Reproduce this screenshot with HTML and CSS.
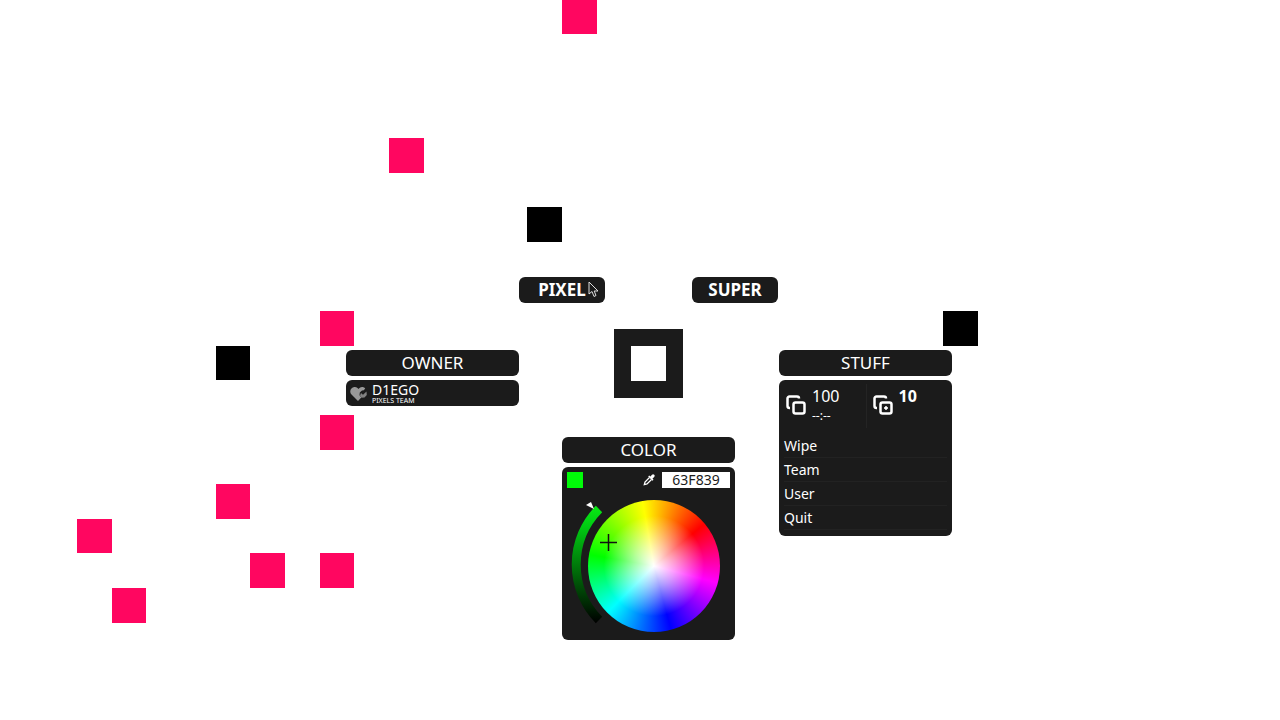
FILE: index.html
```html
<!DOCTYPE html>
<html lang="en">
<head>
<meta charset="utf-8">
<title>Pixels</title>
<link rel="stylesheet" href="styles.css">
</head>
<body>
<main class="board">
  <div class="world">
    <svg class="pixels" width="1" height="1" aria-hidden="true">
      <g class="pink">
        <rect x="-78" y="-361" width="35" height="35"/>
        <rect x="-251" y="-222" width="35" height="35"/>
        <rect x="-320" y="-49" width="34" height="35"/>
        <rect x="-320" y="55" width="34" height="35"/>
        <rect x="-424" y="124" width="34" height="35"/>
        <rect x="-563" y="159" width="35" height="34"/>
        <rect x="-390" y="193" width="35" height="35"/>
        <rect x="-320" y="193" width="34" height="35"/>
        <rect x="-528" y="228" width="34" height="35"/>
      </g>
      <g class="black">
        <rect x="-113" y="-153" width="35" height="35"/>
        <rect x="-424" y="-14" width="34" height="34"/>
        <rect x="303" y="-49" width="35" height="35"/>
      </g>
    </svg>

    <div class="modes">
      <button class="bar mode" type="button">PIXEL</button>
      <button class="bar mode" type="button">SUPER</button>
    </div>

    <div class="focus"></div>

    <section class="panel owner">
      <h2 class="bar title">OWNER</h2>
      <div class="bar player">
        <svg class="heart" viewBox="0 0 18 16" aria-hidden="true">
          <path fill="#999" d="M8 15 1.500 8.500A4.200 4.200 0 0 1 1.500 2.500C3.200.5 6 .5 7.500 2L8.500 3 9.500 2C11.200.5 13.800.5 15.200 2.500L13.800 4.300 12 4.500 9.800 6.500 9.500 9.200 11.300 11.600Z"/>
          <path fill="#808080" d="m11 7 2 1.800 3.500-3.300.3 3.500-2.300 2.600-3 .2-1.500-2.300Z"/>
        </svg>
        <div class="names">
          <span class="name">D1EGO</span>
          <span class="team">PIXELS TEAM</span>
        </div>
      </div>
    </section>

    <section class="panel stuff">
      <h2 class="bar title">STUFF</h2>
      <div class="box">
        <div class="counts">
          <div class="count">
            <svg class="copies" viewBox="0 0 20 20" aria-hidden="true">
              <path d="M4 13H3.500A2 2 0 0 1 1.500 11V3.500A2 2 0 0 1 3.500 1.500H11A2 2 0 0 1 13 3.500"/>
              <rect x="7.500" y="7.500" width="11" height="11" rx="2"/>
            </svg>
            <div class="numbers"><span class="number">100</span><span class="timer">--:--</span></div>
          </div>
          <div class="count second">
            <svg class="copies" viewBox="0 0 20 20" aria-hidden="true">
              <path d="M4 13H3.500A2 2 0 0 1 1.500 11V3.500A2 2 0 0 1 3.500 1.500H11A2 2 0 0 1 13 3.500"/>
              <rect x="7.500" y="7.500" width="11" height="11" rx="2"/>
              <path class="plus" d="M13 11.200V14.800M11.200 13H14.800"/>
            </svg>
            <div class="numbers"><b class="number">10</b></div>
          </div>
        </div>
        <nav class="menu">
          <button type="button">Wipe</button>
          <button type="button">Team</button>
          <button type="button">User</button>
          <button type="button">Quit</button>
        </nav>
      </div>
    </section>

    <section class="panel color">
      <h2 class="bar title">COLOR</h2>
      <div class="box picker">
        <div class="tools">
          <span class="swatch"></span>
          <button class="pick" type="button" aria-label="Pick a color">
            <svg viewBox="0 0 14 14" aria-hidden="true">
              <path d="M7.500 4.500 3 9 2.300 11.700 5 11 9.500 6.500" fill="none" stroke="#fff" stroke-width="1.300"/>
              <path d="m6.200 3.500 1-1 1.200 1L10 1.800A1.500 1.500 0 0 1 12.200 4L10.500 5.600 11.500 6.800 10.500 7.800Z" fill="#fff"/>
            </svg>
          </button>
          <input class="hex" type="text" value="63F839" aria-label="Hex color">
        </div>
        <div class="disc">
          <div class="wheel"></div>
          <svg class="marks" viewBox="0 0 173 146" aria-hidden="true">
            <defs>
              <linearGradient id="shade" gradientUnits="userSpaceOnUse" x1="0" y1="16" x2="0" y2="130">
                <stop offset="0" stop-color="#08e614"/>
                <stop offset="0.150" stop-color="#00cc12"/>
                <stop offset="1" stop-color="#000"/>
              </linearGradient>
            </defs>
            <path d="M37 16A79 79 0 0 0 37 127" fill="none" stroke="url(#shade)" stroke-width="9"/>
            <path d="M24 12 29 9 32 16Z" fill="#fff"/>
            <path d="M38 49.500H55M46.500 41V58" stroke="#111" stroke-width="1.500"/>
          </svg>
        </div>
      </div>
    </section>

    <svg class="cursor" viewBox="0 0 11 17" aria-hidden="true">
      <path d="M1 1V13L4 10.500 6 15.500 8 14.500 6.200 10H10Z" fill="#1b1b1b" stroke="#ddd" stroke-width="1"/>
    </svg>
  </div>
</main>
</body>
</html>
```

FILE: styles.css
```css
* { box-sizing: border-box; }

body {
  margin: 0;
  background: #fff;
  color: #fff;
  font-family: "Noto Sans", sans-serif;
}

button {
  border: 0;
  color: inherit;
  font-family: inherit;
  cursor: pointer;
}

.board {
  position: relative;
  min-height: 100vh;
  overflow: hidden;
}

/* Origin of the map: everything on it is placed from the window's centre. */
.world {
  position: absolute;
  left: 50%;
  top: 50%;
}

.pixels {
  position: absolute;
  left: 0;
  top: 0;
  overflow: visible;
}

.pink { fill: #ff0660; }
.black { fill: #000; }

.bar {
  display: flex;
  align-items: center;
  justify-content: center;
  height: 26px;
  margin: 0;
  padding: 0 0 1px;
  border-radius: 6px;
  background: #1b1b1b;
}

.modes {
  position: absolute;
  left: -121px;
  top: -83px;
  display: flex;
  gap: 87px;
}

.mode {
  width: 86px;
  font-size: 17px;
  font-weight: 700;
}

.focus {
  position: absolute;
  left: -26px;
  top: -31px;
  width: 69px;
  height: 69px;
  border: 17px solid #1b1b1b;
}

.panel {
  position: absolute;
  display: flex;
  flex-direction: column;
  gap: 4px;
  width: 173px;
}

.owner { left: -294px; top: -10px; }
.stuff { left: 139px; top: -10px; }
.color { left: -78px; top: 77px; }

.title {
  font-size: 17px;
  font-weight: 400;
}

.box {
  border-radius: 6px;
  background: #1b1b1b;
}

.player {
  justify-content: flex-start;
  gap: 4px;
  padding: 2px 4px 0;
}

.heart {
  width: 18px;
  height: 16px;
}

.names {
  display: flex;
  flex-direction: column;
}

.name {
  font-size: 14px;
  line-height: 14px;
}

.team {
  font-size: 7px;
  line-height: 8px;
}

.counts {
  display: flex;
  padding: 4px 0;
}

.count {
  display: flex;
  gap: 6px;
  width: 87px;
  height: 44px;
  padding-left: 7px;
}

.second {
  padding-left: 6px;
  border-left: 1px solid #242424;
}

.copies {
  width: 20px;
  height: 20px;
  margin-top: 11px;
  fill: none;
  stroke: #fff;
  stroke-width: 2.5;
}

.plus { stroke-width: 2; }

.numbers {
  display: flex;
  flex-direction: column;
}

.number {
  font-size: 16px;
  line-height: 24px;
}

.timer {
  font-size: 12px;
  line-height: 16px;
}

.menu {
  display: flex;
  flex-direction: column;
  padding: 2px 5px 6px;
}

.menu button {
  height: 24px;
  padding: 0;
  border-bottom: 1px solid #222;
  background: none;
  font-size: 14px;
  line-height: 23px;
  text-align: left;
}

.tools {
  display: flex;
  align-items: center;
  padding: 5px 5px 0;
}

.swatch {
  width: 16px;
  height: 16px;
  background: #00fb08;
}

.pick {
  width: 14px;
  height: 14px;
  margin-left: auto;
  margin-right: 6px;
  padding: 0;
  background: none;
}

.pick svg { display: block; }

.hex {
  width: 68px;
  height: 16px;
  padding: 0;
  border: 0;
  background: #fff;
  color: #1b1b1b;
  font-family: inherit;
  font-size: 14px;
  line-height: 16px;
  text-align: center;
}

.disc {
  position: relative;
  padding: 12px 15px 8px 26px;
}

.wheel {
  width: 132px;
  height: 132px;
  border-radius: 50%;
  background:
    radial-gradient(circle closest-side, #fff, rgba(255, 255, 255, 0.6) 32%, rgba(255, 255, 255, 0) 76%),
    conic-gradient(from 50deg, #f00, #f0f 55deg, #00f 115deg, #0ff 175deg, #0f0 230deg, #ff0 300deg, #f00);
}

.marks {
  position: absolute;
  left: 0;
  top: 5px;
  width: 173px;
  height: 146px;
}

.cursor {
  position: absolute;
  left: -52px;
  top: -79px;
  width: 11px;
  height: 17px;
}
```
